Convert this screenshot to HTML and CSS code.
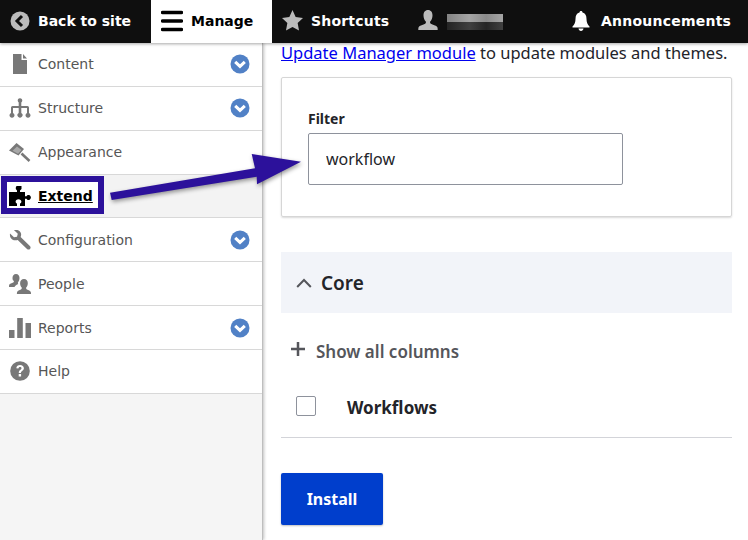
FILE: index.html
```html
<!doctype html>
<html lang="en">
<head>
  <meta charset="UTF-8">
  <meta name="viewport" content="width=device-width, initial-scale=1.0">
  <title>Extend</title>
  <link rel="stylesheet" href="styles.css">
</head>
<body>
  <header class="toolbar">
    <a class="tool tool-back" href="#">
      <svg class="tool-icon" viewBox="0 0 20 20"><circle cx="10" cy="10" r="9.500" fill="#bbb"/><path d="M12 5l-5 5 5 5" fill="none" stroke="#0f0f0f" stroke-width="3"/></svg>
      Back to site
    </a>
    <a class="tool tool-manage" href="#">
      <svg class="tool-burger" viewBox="0 0 22 22"><path d="M1.500 2.500h19M1.500 11h19M1.500 19.500h19" stroke="#000" stroke-width="3.400" stroke-linecap="round"/></svg>
      Manage
    </a>
    <a class="tool tool-shortcuts" href="#">
      <svg class="tool-star" viewBox="0 0 20 20"><path d="M10 0l3 6.600 7 .9-5.100 4.900 1.300 7.200L10 16.100 3.800 19.600l1.300-7.200L0 7.500l7-.9z" fill="#bbb"/></svg>
      Shortcuts
    </a>
    <a class="tool tool-user" href="#">
      <svg class="tool-person" viewBox="0 0 22 22"><path d="M11 0c3 0 4.500 2.300 4.500 5.500 0 2.600-1 4.700-2.300 6-.4 1.100 0 2 1 2.500 2 .8 5.800 1.800 6.300 3.500.2.800.2 2 .2 2.500H1.300c0-.5 0-1.700.2-2.500.5-1.700 4.300-2.700 6.300-3.500 1-.5 1.400-1.400 1-2.500-1.300-1.300-2.300-3.400-2.300-6C6.500 2.300 8 0 11 0z" fill="#bbb"/></svg>
      <span class="user-blur"></span>
    </a>
    <a class="tool tool-news" href="#">
      <svg class="tool-bell" viewBox="0 0 18 20"><path d="M9 0c1 0 1.500.7 1.500 1.600C13.300 2.300 14.500 4.600 14.500 8c0 3.500 1 5.500 3 7.500v1H.5v-1c2-2 3-4 3-7.500 0-3.400 1.200-5.700 4-6.400C7.500.7 8 0 9 0zM6.500 17.500h5C11.300 19 10.300 20 9 20s-2.300-1-2.500-2.500z" fill="#fff"/></svg>
      Announcements
    </a>
  </header>

  <div class="page">
    <nav class="sidebar">
      <ul class="menu">
        <li class="menu-row">
          <svg class="menu-icon" viewBox="0 0 22 20"><path d="M4 0h8.500v6H18v14H4zM14 0l4 4.500h-4z" fill="#787878"/></svg>
          <a href="#">Content</a>
          <svg class="menu-toggle" viewBox="0 0 20 20"><circle cx="10" cy="10" r="9.500" fill="#5181c6"/><path d="M5.200 7.800L10 12.400l4.800-4.600" fill="none" stroke="#fff" stroke-width="3"/></svg>
        </li>
        <li class="menu-row">
          <svg class="menu-icon" viewBox="0 0 22 20"><path d="M8.700 2.500a2.300 2.300 0 1 1 3.600 1.900V8h6.200a1.500 1.500 0 0 1 1.500 1.500v5.500a2.500 2.500 0 1 1-2 0V10h-5.700v5a2.500 2.500 0 1 1-2.600 0v-5H4v5a2.500 2.500 0 1 1-2 0V9.500A1.500 1.500 0 0 1 3.500 8h6.200V4.400a2.300 2.300 0 0 1-1-1.900z" fill="#787878"/></svg>
          <a href="#">Structure</a>
          <svg class="menu-toggle" viewBox="0 0 20 20"><circle cx="10" cy="10" r="9.500" fill="#5181c6"/><path d="M5.200 7.800L10 12.400l4.800-4.600" fill="none" stroke="#fff" stroke-width="3"/></svg>
        </li>
        <li class="menu-row">
          <svg class="menu-icon" viewBox="0 0 22 20"><path d="M0 8.500L7.500 1 15 7 9.500 13.500z" fill="#787878"/><path d="M12.500 11.500L20.500 19" stroke="#787878" stroke-width="2.600" fill="none"/><path d="M3.500 8.700L8 4.500l4.500 3.500-3.400 3.700z" fill="#a8a8a8"/></svg>
          <a href="#">Appearance</a>
        </li>
        <li class="menu-row menu-row-active">
          <span class="extend-box">
            <svg class="menu-icon" viewBox="0 0 22 20"><path d="M8 0h4.500v3L11 4.500V6h5v4.200h1.500c.5-1 1.500-1.400 2.400-1.200 1.200.3 2 1.300 2 2.500s-.8 2.200-2 2.500c-.9.200-1.900-.2-2.400-1.200H16V20h-5v-2.500c1-.4 1.400-1.200 1.400-2 0-1.300-1.200-2.300-2.900-2.300s-2.900 1-2.900 2.300c0 .8.400 1.600 1.400 2V20H0V6h8V4.500L6.800 3c0-1.700.2-3 1.200-3z" fill="#000"/></svg>
            <a href="#">Extend</a>
          </span>
        </li>
        <li class="menu-row menu-row-low">
          <svg class="menu-icon" viewBox="0 0 22 20"><path d="M1 3.500L5 7.300l3-.6.800-3L4.900 0C8-.8 11.300.6 12 3.500c.3 1.300.1 2.500-.4 3.600l9.300 8.900c.9.900.9 2.100.1 2.900-.8.900-2.100.9-3 0l-9.300-9C7.200 10.600 5 10.500 3.200 9.400 1.400 8.100.6 5.800 1 3.500z" fill="#787878"/></svg>
          <a href="#">Configuration</a>
          <svg class="menu-toggle" viewBox="0 0 20 20"><circle cx="10" cy="10" r="9.500" fill="#5181c6"/><path d="M5.200 7.800L10 12.400l4.800-4.600" fill="none" stroke="#fff" stroke-width="3"/></svg>
        </li>
        <li class="menu-row menu-row-low">
          <svg class="menu-icon" viewBox="0 0 22 20"><path d="M7 0c2.300 0 3.500 1.800 3.500 4 0 1.700-.7 3.300-1.500 4.200-.3.700-.2 1.300.2 1.700-1.500.7-3 1.500-3.700 3.100H0c0-1 0-1.700.2-2.200.5-1.200 2.700-1.700 4-2.400.6-.3.900-.9.600-1.700C4 6.800 3.500 5.500 3.500 4 3.500 1.800 4.700 0 7 0z" fill="#787878"/><path d="M15 5c2.500 0 3.800 1.900 3.800 4.300 0 1.800-.7 3.400-1.600 4.300-.3.800 0 1.500.7 1.800 1.600.7 3.500 1.300 3.900 2.500.2.500.2 1.300.2 2.100H7.900c0-.8 0-1.600.2-2.100.4-1.200 2.300-1.800 3.900-2.500.7-.3 1-1 .7-1.800-.9-.9-1.600-2.500-1.600-4.300C11.100 6.900 12.500 5 15 5z" fill="#787878"/></svg>
          <a href="#">People</a>
        </li>
        <li class="menu-row menu-row-low">
          <svg class="menu-icon" viewBox="0 0 22 20"><path d="M0 12h5.500v8H0zM8.200 0h5.600v20H8.200zM16.500 5H22v15h-5.500z" fill="#787878"/></svg>
          <a href="#">Reports</a>
          <svg class="menu-toggle" viewBox="0 0 20 20"><circle cx="10" cy="10" r="9.500" fill="#5181c6"/><path d="M5.200 7.800L10 12.400l4.800-4.600" fill="none" stroke="#fff" stroke-width="3"/></svg>
        </li>
        <li class="menu-row">
          <svg class="menu-icon" viewBox="0 0 20 20"><circle cx="10" cy="10" r="9.800" fill="#787878"/><path d="M6.300 7.300C6.500 5 8 4 10.100 4c2.200 0 3.800 1.300 3.800 3.200 0 2.500-3 2.600-3 4.800H8.800c-.2-3 2.700-3.300 2.700-4.800 0-.8-.6-1.300-1.500-1.300s-1.500.6-1.600 1.500zM8.700 13h2.400v2.500H8.700z" fill="#fff"/></svg>
          <a href="#">Help</a>
        </li>
      </ul>
    </nav>

    <main class="content">
      <p class="intro"><a href="#">Update Manager module</a> to update modules and themes.</p>

      <section class="filter-card">
        <label class="filter-label" for="filter">Filter</label>
        <input class="filter-input" id="filter" type="text" value="workflow">
      </section>

      <div class="group-head">
        <svg class="group-arrow" viewBox="0 0 16 10"><path d="M1.200 9L8 2l6.800 7" fill="none" stroke="#55565b" stroke-width="2"/></svg>
        Core
      </div>

      <div class="show-columns">
        <svg class="plus" viewBox="0 0 14 14"><path d="M7 0v14M0 7h14" stroke="#55565b" stroke-width="2.500"/></svg>
        Show all columns
      </div>

      <div class="module-row">
        <span class="checkbox"></span>
        <span class="module-name">Workflows</span>
      </div>

      <button class="install" type="button">Install</button>
    </main>
  </div>

  <svg class="callout" viewBox="0 0 210 50" width="210" height="50">
    <path d="M0 40.700L145 16.300 141.700 2 191 9.700 147 32.300 146.700 24.700 1.700 48z" fill="#2c119b"/>
  </svg>
</body>
</html>
```

FILE: styles.css
```css
* {
    box-sizing: border-box;
}
body {
    margin: 0;
    height: 540px;
    overflow: hidden;
    position: relative;
    font-family: "Noto Sans", "Open Sans", sans-serif;
    color: #232429;
    background: #fff;
}
a {
    color: inherit;
    text-decoration: none;
}

/* top bar */
.toolbar {
    display: flex;
    height: 43px;
    background: #0f0f0f;
    color: #fff;
    font-family: "DejaVu Sans", Verdana, sans-serif;
    font-size: 14px;
    font-weight: bold;
    box-shadow: 0 1px 3px rgba(0, 0, 0, .35);
    position: relative;
    z-index: 2;
}
.tool {
    display: flex;
    align-items: center;
    height: 43px;
    padding-bottom: 2px;
    white-space: nowrap;
}
.tool-icon {
    width: 20px;
    height: 20px;
    flex: none;
}
.tool-back {
    width: 151px;
    padding-left: 10px;
    gap: 8px;
}
.tool-manage {
    width: 121px;
    padding-left: 10px;
    gap: 8px;
    background: #fff;
    color: #000;
}
.tool-burger {
    width: 22px;
    height: 22px;
}
.tool-shortcuts {
    width: 135px;
    padding-left: 10px;
    gap: 8px;
    letter-spacing: .2px;
}
.tool-star {
    width: 21px;
    height: 21px;
}
.tool-user {
    width: 165px;
    padding-left: 10px;
    gap: 8px;
}
.tool-person {
    width: 22px;
    height: 22px;
}
.user-blur {
    width: 56px;
    height: 16px;
    margin-top: 2px;
    background:
        linear-gradient(90deg, rgba(0, 0, 0, .15), rgba(255, 255, 255, .1) 40%, rgba(0, 0, 0, .1) 70%, rgba(255, 255, 255, .1)),
        linear-gradient(#9a9a9a 50%, #2a2a2a 50%);
}
.tool-news {
    gap: 11px;
    letter-spacing: .23px;
}
.tool-bell {
    width: 18px;
    height: 20px;
}

/* sidebar */
.page {
    display: flex;
    height: 497px;
}
.sidebar {
    width: 263px;
    flex: none;
    background: #f5f5f5;
    border-right: 1px solid #bebebe;
    box-shadow: 1px 0 3px rgba(0, 0, 0, .25);
}
.menu {
    list-style: none;
    margin: 0;
    padding: 0;
}
.menu-row {
    display: flex;
    align-items: center;
    height: 44px;
    padding: 0 12px 2px 9px;
    gap: 7px;
    background: #fff;
    border-bottom: 1px solid #d8d8d8;
    font-family: "DejaVu Sans", Verdana, sans-serif;
    font-size: 14px;
    color: #565656;
}
.menu-row-low {
    padding-bottom: 0;
}
.menu-row-active {
    align-items: flex-start;
    background: #f3f3f3;
    padding: 1px 0 0 1px;
    height: 43px;
}
.menu-icon {
    width: 22px;
    height: 20px;
    flex: none;
}
.menu-toggle {
    width: 20px;
    height: 20px;
    margin-left: auto;
}
.extend-box {
    display: flex;
    align-items: center;
    width: 103px;
    height: 38px;
    gap: 7px;
    padding: 1px 0 0 2px;
    background: #fff;
    border: 6px solid #2c119b;
    font-size: 14px;
    font-weight: bold;
    color: #000;
}
.extend-box a {
    text-decoration: underline;
}

/* main column */
.content {
    flex: 1;
    padding: 0 16px 0 18px;
    min-width: 0;
}
.intro {
    margin: 0;
    height: 34px;
    line-height: 20px;
    font-size: 16.5px;
    white-space: nowrap;
}
.intro a {
    color: #0000ee;
    text-decoration: underline;
}
.filter-card {
    height: 140px;
    padding: 30px 26px 0;
    border: 1px solid #d6d6d6;
    border-radius: 2px;
    box-shadow: 0 1px 2px rgba(0, 0, 0, .15);
}
.filter-label {
    display: block;
    font-size: 14px;
    font-weight: bold;
    line-height: 21px;
    margin-bottom: 4px;
}
.filter-input {
    display: block;
    width: 315px;
    height: 52px;
    padding: 0 17px;
    border: 1px solid #8e929c;
    border-radius: 2px;
    font-family: inherit;
    font-size: 16px;
    color: #232429;
}
.group-head {
    display: flex;
    align-items: center;
    gap: 9px;
    height: 61px;
    margin-top: 35px;
    padding-left: 15px;
    background: #f2f4f9;
    font-size: 19px;
    font-weight: 600;
}
.group-arrow {
    width: 16px;
    height: 10px;
}
.show-columns {
    display: flex;
    align-items: center;
    gap: 11px;
    height: 36px;
    margin-top: 20px;
    padding-left: 10px;
    font-size: 17px;
    font-weight: 600;
    color: #55565b;
}
.plus {
    width: 14px;
    height: 14px;
    margin-top: -4px;
}
.module-row {
    display: flex;
    align-items: center;
    height: 67px;
    margin-top: 2px;
    padding: 6px 0 0 15px;
    border-bottom: 1px solid #d3d4d9;
}
.checkbox {
    width: 20px;
    height: 20px;
    margin-top: -2px;
    border: 1px solid #8e929c;
    border-radius: 2px;
    background: #fff;
}
.module-name {
    margin-left: 31px;
    font-size: 17px;
    font-weight: bold;
}
.install {
    display: block;
    width: 102px;
    height: 52px;
    margin-top: 35px;
    border: none;
    border-radius: 2px;
    background: #003ecc;
    color: #fff;
    font-family: inherit;
    font-size: 16px;
    font-weight: bold;
    box-shadow: 0 1px 2px rgba(0, 0, 0, .25);
    cursor: pointer;
}

/* annotation arrow over the page */
.callout {
    position: absolute;
    left: 110px;
    top: 152px;
    z-index: 3;
    filter: drop-shadow(1px 2px 2px rgba(0, 0, 0, .4));
}
```
